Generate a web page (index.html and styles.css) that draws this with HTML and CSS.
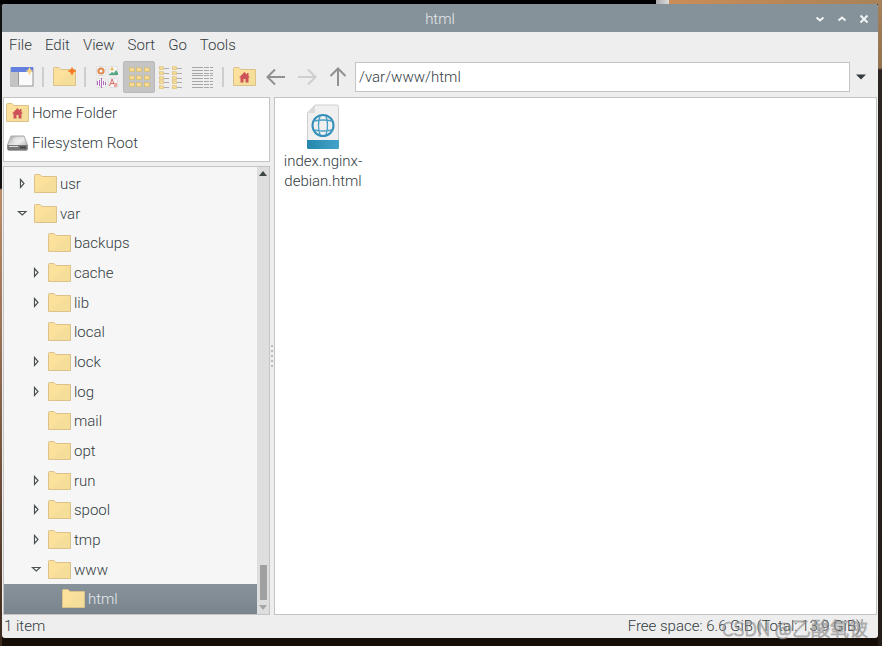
FILE: index.html
```html
<!DOCTYPE html>
<html lang="en">
<head>
<meta charset="utf-8">
<title>html</title>
<link rel="stylesheet" href="styles.css">
</head>
<body>
<svg class="defs" aria-hidden="true">
  <defs>
    <linearGradient id="paper" x1="0" y1="0" x2="1" y2="1"><stop offset="0.45" stop-color="#fbe19b"/><stop offset="0.6" stop-color="#f5dd9a"/></linearGradient>
    <linearGradient id="sea" x1="0" y1="0" x2="1" y2="0"><stop offset="0" stop-color="#2587ac"/><stop offset="1" stop-color="#44a3ca"/></linearGradient>
    <linearGradient id="metal" x1="0" y1="0" x2="1" y2="1"><stop offset="0" stop-color="#a5a5a5"/><stop offset="0.5" stop-color="#eeeeee"/><stop offset="1" stop-color="#999"/></linearGradient>
    <symbol id="folder" viewBox="0 0 23 20"><path d="M.5 1.5Q.5.5 1.5.5H6L8 2.5H22.5V18.5H.5Z" fill="url(#paper)" stroke="#dbc18a"/></symbol>
    <symbol id="home" viewBox="0 0 23 20"><use href="#folder" width="23" height="20"/><path d="M11.500 5L6 10.500H7.500V15.500H10.500V12H12.500V15.500H15.500V10.500H17L15.500 9V6H14V7.500Z" fill="#ce5459"/></symbol>
    <symbol id="closed" viewBox="0 0 12 12"><path d="M4.500 1.500L8 5.500L4.500 9.500Z" fill="#fff" stroke="#4c5254" stroke-width="1.200"/></symbol>
    <symbol id="open" viewBox="0 0 12 12"><path d="M2.500 3.500H10L6.250 7Z" fill="#fff" stroke="#4c5254" stroke-width="1.200"/></symbol>
    <symbol id="mini" viewBox="0 0 6 5"><path d="M.5.5H2.500L3 1H5.500V4.500H.5Z" fill="#f7dc94" stroke="#d9b96e" stroke-width=".8"/></symbol>
  </defs>
</svg>
<main class="window">
  <header class="titlebar">
    <h1>html</h1>
    <div class="controls">
      <button aria-label="Minimise"><svg width="10" height="10" viewBox="0 0 10 10"><path d="M1.500 3.500L5 6.500L8.500 3.500"/></svg></button>
      <button aria-label="Maximise"><svg width="10" height="10" viewBox="0 0 10 10"><path d="M1.500 6.500L5 3.500L8.500 6.500"/></svg></button>
      <button aria-label="Close"><svg width="10" height="10" viewBox="0 0 10 10"><path d="M1.500 1.500L8.500 8.500M8.500 1.500L1.500 8.500"/></svg></button>
    </div>
  </header>
  <nav class="menubar">
    <button>File</button><button>Edit</button><button>View</button><button>Sort</button><button>Go</button><button>Tools</button>
  </nav>
  <div class="toolbar">
    <button class="tool" aria-label="New window"><svg width="24" height="20" viewBox="0 0 24 20"><rect x="1" y="1" width="22" height="18" fill="#fafafa" stroke="#929292"/><rect x="2" y="5" width="6" height="13" fill="#c4c4c4"/><path d="M8.500 5V18" stroke="#999"/><rect x="1" width="22" height="5" fill="#6380e1"/><path d="M19.500 0L21 3L23.500 4L21 5L19.500 8.500L18 5L15.500 4L18 3Z" fill="#fbd783"/></svg></button>
    <span class="sep"></span>
    <button class="tool" aria-label="New folder"><svg width="23" height="20" viewBox="0 0 23 20"><use href="#folder" width="23" height="20"/><path d="M19 .5L20.500 3L23 4L20.500 5L19 8L17.500 5L15 4L17.500 3Z" fill="#f37724" stroke="#f37724" stroke-width=".6"/></svg></button>
    <span class="sep"></span>
    <div class="views">
      <button class="tool" aria-label="Thumbnails"><svg width="24" height="24" viewBox="0 0 24 24"><g fill="#f5f5f5" stroke="#dedede"><rect x="1.500" y="1.500" width="9" height="9" rx="1"/><rect x="13.500" y="1.500" width="9" height="9" rx="1"/><rect x="1.500" y="13.500" width="9" height="9" rx="1"/><rect x="13.500" y="13.500" width="9" height="9" rx="1"/></g><circle cx="6" cy="6" r="2.600" fill="none" stroke="#dd8a4e" stroke-width="2"/><circle cx="17" cy="4" r="1.500" fill="#e7b650"/><path d="M13.500 10L17 7L19 8L21 5L23 8V10Z" fill="#5aa684"/><path d="M2.500 16V20M4.500 15V21M6.500 13V23M8.500 16V20M10.500 17V20" stroke="#b069bd"/><path d="M14.500 21L17 14L19.500 20M15.500 18.500H19" fill="none" stroke="#d76b6b"/><rect x="19" y="18" width="3" height="4" fill="#eaa7a0"/></svg></button>
      <button class="tool active" aria-label="Icons" aria-pressed="true"><svg width="22" height="22" viewBox="0 0 22 22"><g id="c3"><use href="#mini" x="1" y="1" width="6" height="5"/><use href="#mini" x="1" y="9" width="6" height="5"/><use href="#mini" x="1" y="16" width="6" height="5"/></g><use href="#c3" x="7"/><use href="#c3" x="15"/></svg></button>
      <button class="tool" aria-label="Compact list"><svg width="24" height="24" viewBox="0 0 24 24"><g id="c5"><use href="#mini" x="0" y="1" width="5" height="4"/><use href="#mini" x="0" y="6" width="5" height="4"/><use href="#mini" x="0" y="11" width="5" height="4"/><use href="#mini" x="0" y="15" width="5" height="4"/><use href="#mini" x="0" y="20" width="5" height="4"/><path d="M5 3.500H10M5 8.500H10M5 13.500H10M5 17.500H10M5 22.500H10" stroke="#adadad"/></g><use href="#c5" x="13"/></svg></button>
      <button class="tool" aria-label="Detailed list"><svg width="22" height="22" viewBox="0 0 22 22"><path d="M0 1.500H21M0 4.500H21M0 7.500H21M0 9.500H21M0 12.500H21M0 15.500H21M0 18.500H21M0 21.500H21" stroke="#a7a7a7" stroke-dasharray="11 1 5 1 3 9"/></svg></button>
    </div>
    <span class="sep"></span>
    <button class="tool" aria-label="Home"><svg width="23" height="20"><use href="#home" width="23" height="20"/></svg></button>
    <button class="tool arrow" aria-label="Back"><svg width="20" height="20" viewBox="0 0 20 20"><path d="M19 10H2M9 2.500L1.500 10L9 17.500"/></svg></button>
    <button class="tool arrow" aria-label="Forward" disabled><svg width="20" height="20" viewBox="0 0 20 20"><path d="M1 10H18M11 2.500L18.500 10L11 17.500"/></svg></button>
    <button class="tool arrow" aria-label="Up"><svg width="20" height="20" viewBox="0 0 20 20"><path d="M10 19V2M2.500 9L10 1.500L17.500 9"/></svg></button>
    <input class="path" type="text" aria-label="Location" value="/var/www/html">
    <button class="drop" aria-label="Location history"><svg width="10" height="6" viewBox="0 0 10 6"><path d="M0 .5H10L5 5.500Z" fill="#333b3e"/></svg></button>
  </div>
  <div class="content">
    <aside class="side">
      <ul class="places">
        <li><svg width="23" height="20"><use href="#home" width="23" height="20"/></svg>Home Folder</li>
        <li><svg width="23" height="20" viewBox="0 0 23 20"><path d="M5 3H18L21.500 12V16Q21.500 17 20 17H3Q1.500 17 1.500 16V12Z" fill="url(#metal)" stroke="#aaa"/><path d="M1.500 12H21.500V16Q21.500 17.500 20 17.500H3Q1.500 17.500 1.500 16Z" fill="#777"/><path d="M3 13.500H12" stroke="#ddd"/><path d="M14 14.500H20" stroke="#444" stroke-width="2"/><ellipse cx="12" cy="7" rx="5" ry="3" fill="#eee" opacity=".6"/></svg>Filesystem Root</li>
      </ul>
      <div class="treebox">
        <ul class="tree">
          <li><svg class="exp"><use href="#closed"/></svg><svg class="fold"><use href="#folder"/></svg>usr</li>
          <li><svg class="exp"><use href="#open"/></svg><svg class="fold"><use href="#folder"/></svg>var</li>
          <li class="l1"><svg class="exp"></svg><svg class="fold"><use href="#folder"/></svg>backups</li>
          <li class="l1"><svg class="exp"><use href="#closed"/></svg><svg class="fold"><use href="#folder"/></svg>cache</li>
          <li class="l1"><svg class="exp"><use href="#closed"/></svg><svg class="fold"><use href="#folder"/></svg>lib</li>
          <li class="l1"><svg class="exp"></svg><svg class="fold"><use href="#folder"/></svg>local</li>
          <li class="l1"><svg class="exp"><use href="#closed"/></svg><svg class="fold"><use href="#folder"/></svg>lock</li>
          <li class="l1"><svg class="exp"><use href="#closed"/></svg><svg class="fold"><use href="#folder"/></svg>log</li>
          <li class="l1"><svg class="exp"></svg><svg class="fold"><use href="#folder"/></svg>mail</li>
          <li class="l1"><svg class="exp"></svg><svg class="fold"><use href="#folder"/></svg>opt</li>
          <li class="l1"><svg class="exp"><use href="#closed"/></svg><svg class="fold"><use href="#folder"/></svg>run</li>
          <li class="l1"><svg class="exp"><use href="#closed"/></svg><svg class="fold"><use href="#folder"/></svg>spool</li>
          <li class="l1"><svg class="exp"><use href="#closed"/></svg><svg class="fold"><use href="#folder"/></svg>tmp</li>
          <li class="l1"><svg class="exp"><use href="#open"/></svg><svg class="fold"><use href="#folder"/></svg>www</li>
          <li class="l2 selected"><svg class="exp"></svg><svg class="fold"><use href="#folder"/></svg>html</li>
        </ul>
        <div class="scroll">
          <svg width="8" height="5" viewBox="0 0 8 5"><path d="M0 5L4 0L8 5Z" fill="#3d4446"/></svg>
          <span class="thumb"></span>
          <svg width="8" height="5" viewBox="0 0 8 5"><path d="M0 0L4 5L8 0Z" fill="#a6a6a6"/></svg>
        </div>
      </div>
    </aside>
    <div class="grip"><i></i><i></i><i></i><i></i><i></i></div>
    <section class="files">
      <figure class="file">
        <svg width="34" height="46" viewBox="0 0 34 46"><path d="M9 1H31Q32.500 1 32.500 2.500V44H1.500V9Z" fill="#f0f0f0" stroke="#cfcfcf"/><path d="M9 1V8Q9 9 8 9H1.500Z" fill="#dadada"/><path d="M1 36H33V43.500Q33 45 31.500 45H2.500Q1 45 1 43.500Z" fill="url(#sea)"/><g fill="none" stroke="#4a9fc4" stroke-width="1.400"><circle cx="17" cy="21.500" r="10.500" stroke="#338fb9" stroke-width="2"/><path d="M8 17Q17 15 26 17M8 26Q17 28 26 26M14 12Q11 21.500 14 31M20 12Q23 21.500 20 31"/></g></svg>
        <figcaption>index.nginx-<br>debian.html</figcaption>
      </figure>
    </section>
  </div>
  <footer class="status"><span>1 item</span><span>Free space: 6.6 GiB (Total: 13.9 GiB)</span></footer>
</main>
<div class="watermark">CSDN @乙酸氧铍</div>
</body>
</html>
```
FILE: styles.css
```css
* { box-sizing: border-box; }
body {
  margin: 0;
  height: 100vh;
  padding: 4px 4px 8px 2px;
  position: relative;
  overflow: hidden;
  font: 300 15px/20px Roboto, "Liberation Sans", sans-serif;
  color: #333c3f;
  background:
    linear-gradient(90deg, #000 656px, #aaa 656px, #ddd 669px, #cb8d57 669px, #a88258) top / 100% 4px no-repeat,
    linear-gradient(#a5825b, #92714f 68px, #2c2420 70px, #241c18) right / 4px 100% no-repeat,
    linear-gradient(#111 188px, #b98b68 190px, #9a7256 330px, #3a281c) left / 2px 100% no-repeat,
    #150e08;
}
ul, h1, figure { margin: 0; padding: 0; list-style: none; }
button { font: inherit; color: inherit; border: 0; background: none; padding: 0; }
svg { display: block; flex: none; }
.defs { position: absolute; width: 0; height: 0; }
.window {
  height: 100%;
  display: flex;
  flex-direction: column;
  background: #eee;
  border-radius: 3px;
  overflow: hidden;
}
.titlebar {
  height: 28px;
  flex: none;
  display: grid;
  grid-template-columns: 1fr auto 1fr;
  align-items: center;
  padding-top: 2px;
  background: #86929a;
  color: #e6e8ea;
}
.titlebar h1 { grid-column: 2; font: inherit; }
.controls { display: flex; justify-content: flex-end; gap: 12px; padding-right: 9px; }
.controls path { fill: none; stroke: #f2f4f5; stroke-width: 2; }
.menubar { display: flex; gap: 13px; padding: 2px 7px 4px; height: 28px; flex: none; }
.toolbar { display: flex; align-items: center; height: 34px; flex: none; padding-left: 4px; }
.tool { width: 32px; height: 32px; display: grid; place-items: center; flex: none; }
.tool.active { background: #c4c4c4; border: 1px solid #b9b9b9; border-radius: 2px; }
.views { display: flex; margin-left: 1px; }
.arrow { width: 31px; }
.arrow path { fill: none; stroke: #919191; stroke-width: 2; }
.arrow:disabled path { stroke: #cecece; }
.sep { width: 2px; height: 20px; margin: 0 4px; background: #cecece; flex: none; }
.views + .sep { margin: 0 4px 0 3px; }
.path {
  flex: 1;
  min-width: 0;
  height: 30px;
  padding: 0 3px;
  margin-left: 2px;
  border: 1px solid #c4c4c4;
  background: #fff;
  font: inherit;
  color: inherit;
}
.drop { width: 28px; height: 30px; padding-left: 6px; }
.content { flex: 1; min-height: 0; display: flex; padding: 3px 1px 0; }
.side { width: 267px; flex: none; display: flex; flex-direction: column; gap: 4px; }
.places { height: 65px; flex: none; background: #fff; border: 1px solid #c4c4c4; }
.places li { height: 30px; display: flex; align-items: center; gap: 3px; padding-left: 2px; }
.treebox { flex: 1; min-height: 0; display: flex; border: 1px solid #c4c4c4; background: #f6f6f6; }
.tree { flex: 1; display: flex; flex-direction: column; padding-top: 2px; }
.tree li { flex: 1; display: flex; align-items: center; padding-left: 12px; }
.tree .l1 { padding-left: 26px; }
.tree .l2 { padding-left: 40px; }
.tree .selected { background: linear-gradient(#87929b, #79848d); color: #e8eaec; }
.exp { width: 12px; height: 12px; margin-right: 6px; }
.fold { width: 23px; height: 20px; margin-right: 3px; }
.scroll { width: 12px; display: flex; flex-direction: column; align-items: center; background: #dedede; padding: 4px 0; }
.thumb { width: 7px; height: 35px; margin: auto 0 5px; background: #a0a0a0; }
.grip { width: 4px; display: flex; flex-direction: column; justify-content: center; align-items: center; gap: 3px; }
.grip i { width: 2px; height: 2px; background: #bbb; }
.files { flex: 1; background: #fff; border: 1px solid #c4c4c4; padding: 6px 0; }
.file { width: 96px; display: flex; flex-direction: column; align-items: center; gap: 1px; text-align: center; }
.status { height: 23px; flex: none; display: flex; justify-content: space-between; padding: 1px 17px 0 2px; }
.watermark {
  position: absolute;
  right: 14px;
  bottom: 4px;
  font: 300 19px/28px "Noto Sans CJK SC", sans-serif;
  color: rgba(235, 235, 235, 0.5);
  -webkit-text-stroke: 1px rgba(110, 110, 110, 0.5);
}
```
